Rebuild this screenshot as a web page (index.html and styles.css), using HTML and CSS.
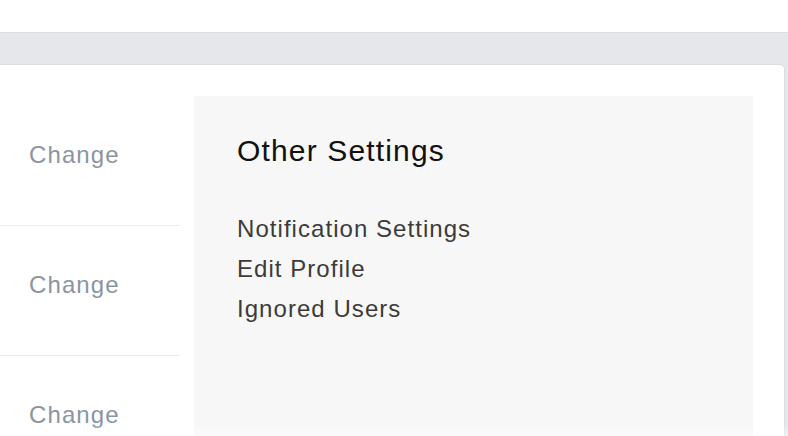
FILE: index.html
```html
<!DOCTYPE html>
<html lang="en">
<head>
<meta charset="utf-8">
<title>Settings</title>
<link rel="stylesheet" href="styles.css">
</head>
<body>
<header class="topbar"></header>
<main class="main">
  <section class="card">
    <div class="rows">
      <div class="row"><a class="change" href="#">Change</a></div>
      <div class="row"><a class="change" href="#">Change</a></div>
      <div class="row"><a class="change" href="#">Change</a></div>
    </div>
    <aside class="panel">
      <h2 class="panel-title">Other Settings</h2>
      <ul class="links">
        <li><a href="#">Notification Settings</a></li>
        <li><a href="#">Edit Profile</a></li>
        <li><a href="#">Ignored Users</a></li>
      </ul>
    </aside>
  </section>
</main>
<div class="fade"></div>
</body>
</html>
```
FILE: styles.css
```css
html, body {
  margin: 0;
  padding: 0;
  height: 100%;
  overflow: hidden;
}
body {
  font-family: "Liberation Sans", Arial, Helvetica, sans-serif;
  background: #e6e7eb;
}
.topbar {
  height: 32px;
  background: #ffffff;
  border-bottom: 1px solid #dcdde0;
}
.main {
  padding: 31px 3px 0 0;
  background: #e6e7eb;
  overflow: hidden;
}
.card {
  display: flex;
  gap: 14px;
  margin-left: -11px;
  padding: 31px 31px 40px 0;
  background: #ffffff;
  border: 1px solid #dcdde0;
  border-radius: 5px;
  min-height: 500px;
}
.rows {
  width: 190px;
  flex: none;
}
.row {
  padding: 44px 0 55px 39px;
  border-bottom: 1px solid #ebebec;
}
.row:last-child {
  border-bottom: none;
}
.change {
  display: block;
  font-size: 24px;
  line-height: 30px;
  letter-spacing: 1.1px;
  color: #8a95a2;
  text-decoration: none;
}
.panel {
  flex: 1;
  background: #f7f7f7;
  padding: 37px 43px 40px;
}
.panel-title {
  margin: 0 0 40px;
  font-size: 30px;
  line-height: 36px;
  font-weight: normal;
  letter-spacing: 1.15px;
  color: #111111;
}
.links {
  list-style: none;
  margin: 0;
  padding: 0;
}
.links a {
  display: block;
  font-size: 24px;
  line-height: 40px;
  letter-spacing: 1.05px;
  color: #3b3b3b;
  text-decoration: none;
}
.fade {
  position: fixed;
  left: 0;
  right: 0;
  bottom: 0;
  height: 12px;
  background: linear-gradient(rgba(255,255,255,0), rgba(255,255,255,0.45));
  pointer-events: none;
}
```
